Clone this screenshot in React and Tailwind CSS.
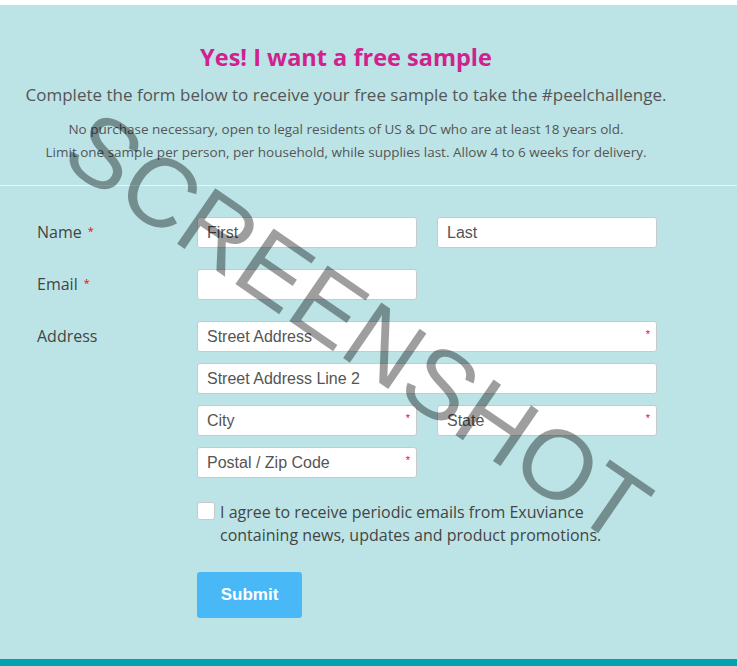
import React from 'react';

const raleway = { fontFamily: '"Open Sans", Lato, sans-serif' };

function Field({ placeholder, required = false, className = '' }) {
  return (
    <div className={`relative h-[31px] rounded-[3px] border border-[#c9c9c9] bg-white ${className}`}>
      <input
        type="text"
        placeholder={placeholder}
        className="h-full w-full rounded-[3px] bg-transparent px-[9px] font-['Liberation_Sans',Arial,sans-serif] text-[16px] text-[#555] placeholder:text-[#555] outline-none"
      />
      {required && (
        <span className="absolute right-[6px] top-[7px] font-['Liberation_Sans',Arial,sans-serif] text-[11px] leading-none text-[#ff0000]">*</span>
      )}
    </div>
  );
}

function Label({ children, required = false }) {
  return (
    <div className="w-[160px] shrink-0 pt-[3px] font-['Open_Sans',sans-serif] text-[16px] text-[#444]">
      {children}
      {required && <span className="ml-[6px] align-[3px] text-[11px] text-[#ff0000]">*</span>}
    </div>
  );
}

export default function App() {
  return (
    <div className="relative flex h-[666px] w-[737px] flex-col overflow-hidden bg-white pt-[5px]">
      <div className="flex flex-1 flex-col bg-[#bce4e6]">
        {/* Header */}
        <div className="flex flex-col items-center pr-[45px] pt-[37px] pb-[21px] text-center">
          <h1 className="font-['Open_Sans',sans-serif] text-[23.5px] font-bold leading-[30px] text-[#d0218f]">
            Yes! I want a free sample
          </h1>
          <p className="mt-[11px] text-[17px] leading-[24px] text-[#555]" style={raleway}>
            Complete the form below to receive your free sample to take the #peelchallenge.
          </p>
          <p className="mt-[11px] text-[13.5px] leading-[23px] text-[#555]" style={raleway}>
            No purchase necessary, open to legal residents of US &amp; DC who are at least 18 years old.
            <br />
            Limit one sample per person, per household, while supplies last. Allow 4 to 6 weeks for delivery.
          </p>
        </div>

        <div className="border-t border-[#e6f4f5]" />

        {/* Form */}
        <div className="flex flex-col pl-[37px] pt-[31px]">
          <div className="flex">
            <Label required>Name</Label>
            <div className="flex gap-[20px]">
              <Field placeholder="First" className="w-[220px]" />
              <Field placeholder="Last" className="w-[220px]" />
            </div>
          </div>

          <div className="mt-[21px] flex">
            <Label required>Email</Label>
            <Field className="w-[220px]" />
          </div>

          <div className="mt-[21px] flex">
            <Label>Address</Label>
            <div className="flex flex-col gap-[11px]">
              <Field placeholder="Street Address" required className="w-[460px]" />
              <Field placeholder="Street Address Line 2" className="w-[460px]" />
              <div className="flex gap-[20px]">
                <Field placeholder="City" required className="w-[220px]" />
                <Field placeholder="State" required className="w-[220px]" />
              </div>
              <Field placeholder="Postal / Zip Code" required className="w-[220px]" />
            </div>
          </div>

          <div className="mt-[23px] flex pl-[160px]">
            <label className="flex items-start gap-[5px]">
              <span className="mt-[1px] h-[18px] w-[18px] shrink-0 rounded-[3px] border border-[#c9c9c9] bg-white" />
              <span className="font-['Open_Sans',sans-serif] text-[16px] leading-[23px] text-[#444]">
                I agree to receive periodic emails from Exuviance
                <br />
                containing news, updates and product promotions.
              </span>
            </label>
          </div>

          <div className="mt-[25px] pl-[160px]">
            <button className="h-[46px] w-[105px] rounded-[3px] bg-[#48b8f7] font-['Liberation_Sans',Arial,sans-serif] text-[17px] font-bold text-white">
              Submit
            </button>
          </div>
        </div>
      </div>
      <div className="h-[7px] bg-[#00a3ad]" />

      {/* Watermark */}
      <div className="pointer-events-none absolute left-[358px] top-[327px] -translate-x-1/2 -translate-y-1/2 rotate-[34.5deg] whitespace-nowrap font-['Liberation_Sans',Arial,sans-serif] text-[98px] leading-none text-black/[0.38]">
        SCREENSHOT
      </div>
    </div>
  );
}
